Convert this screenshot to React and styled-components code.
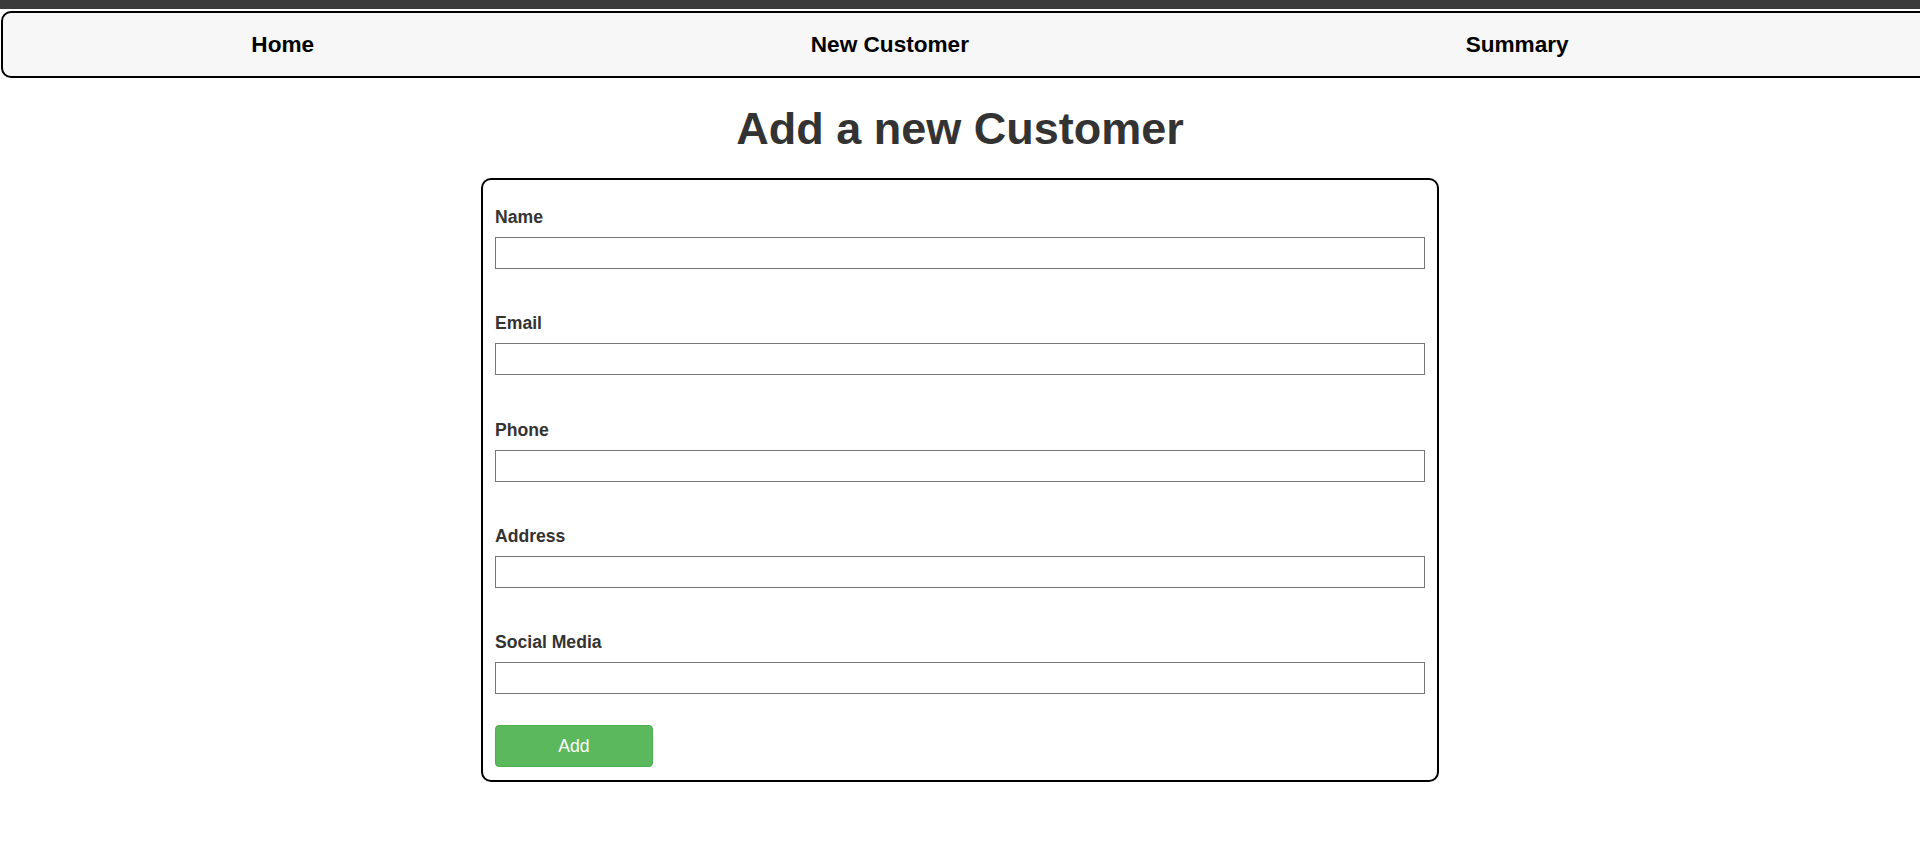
import React from 'react';
import styled, { createGlobalStyle } from 'styled-components';

const GlobalStyle = createGlobalStyle`
  html, body {
    margin: 0;
    padding: 0;
    background: #ffffff;
    font-family: "Liberation Sans", Arial, sans-serif;
  }

  body {
    overflow-x: hidden;
  }
`;

const fields = [
  { id: 'name', label: 'Name', type: 'text' },
  { id: 'email', label: 'Email', type: 'email' },
  { id: 'phone', label: 'Phone', type: 'tel' },
  { id: 'address', label: 'Address', type: 'text' },
  { id: 'social', label: 'Social Media', type: 'text' },
];

const NavBar = () => {
  return (
    <NavBox>
      <NavList>
        <NavItem href="#">Home</NavItem>
        <NavItem href="#">New Customer</NavItem>
        <NavItem href="#">Summary</NavItem>
      </NavList>
    </NavBox>
  );
};

const Field = ({ id, label, type }) => {
  return (
    <FieldBox>
      <Label htmlFor={id}>{label}</Label>
      <Input id={id} type={type} />
    </FieldBox>
  );
};

const CustomerForm = () => {
  return (
    <FormCard onSubmit={(e) => e.preventDefault()}>
      {fields.map((f) => (
        <Field key={f.id} {...f} />
      ))}
      <AddButton type="submit">Add</AddButton>
    </FormCard>
  );
};

const App = () => {
  return (
    <Page>
      <GlobalStyle />
      <TopStrip />
      <NavBar />
      <Title>Add a new Customer</Title>
      <CustomerForm />
    </Page>
  );
};

export default App;

const Page = styled.div`
  width: 100%;
  overflow: hidden;
  padding-bottom: 40px;
`;

const TopStrip = styled.div`
  height: 9px;
  background: #3b3b3b;
  margin-bottom: 2px;
`;

const NavBox = styled.nav`
  box-sizing: border-box;
  height: 67px;
  width: calc(100% + 20px);
  margin-left: 1px;
  background: #f7f7f7;
  border: 2px solid #000;
  border-radius: 10px;
`;

const NavList = styled.div`
  display: flex;
  align-items: center;
  justify-content: space-around;
  width: 1814px;
  height: 100%;
`;

const NavItem = styled.a`
  font-size: 22.6px;
  font-weight: bold;
  color: #000;
  text-decoration: none;
`;

const Title = styled.h1`
  margin: 25px 0 23px;
  font-size: 45px;
  font-weight: bold;
  line-height: normal;
  text-align: center;
  color: #333;
`;

const FormCard = styled.form`
  box-sizing: border-box;
  width: 958px;
  margin: 0 auto;
  padding: 12px 12px 13px;
  border: 2px solid #000;
  border-radius: 10px;
  display: flex;
  flex-direction: column;
  align-items: flex-start;
`;

const FieldBox = styled.div`
  display: flex;
  flex-direction: column;
  gap: 9px;
  width: 100%;
  padding-top: 15px;
  margin-bottom: 29.3px;

  &:last-of-type {
    margin-bottom: 31px;
  }
`;

const Label = styled.label`
  font-size: 17.6px;
  font-weight: bold;
  line-height: normal;
  color: #333;
`;

const Input = styled.input`
  box-sizing: border-box;
  width: 100%;
  height: 32px;
  margin: 0;
  padding: 4px 8px;
  border: 1px solid #767676;
  border-radius: 0;
  font-family: inherit;
  font-size: 16px;
  outline: none;
`;

const AddButton = styled.button`
  box-sizing: border-box;
  width: 158px;
  height: 42px;
  background: #5cb85c;
  border: 1px solid #4cae4c;
  border-radius: 4px;
  color: #fff;
  font-family: inherit;
  font-size: 17.6px;
  cursor: pointer;
`;
